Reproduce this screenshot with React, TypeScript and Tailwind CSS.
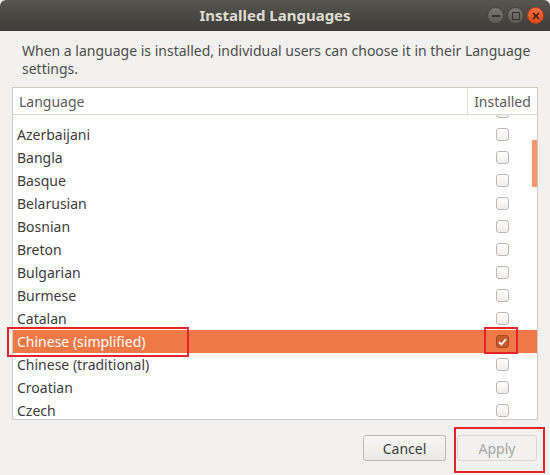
import React from 'react';

const languages = [
  { name: '', installed: false },
  { name: 'Azerbaijani', installed: false },
  { name: 'Bangla', installed: false },
  { name: 'Basque', installed: false },
  { name: 'Belarusian', installed: false },
  { name: 'Bosnian', installed: false },
  { name: 'Breton', installed: false },
  { name: 'Bulgarian', installed: false },
  { name: 'Burmese', installed: false },
  { name: 'Catalan', installed: false },
  { name: 'Chinese (simplified)', installed: true, selected: true },
  { name: 'Chinese (traditional)', installed: false },
  { name: 'Croatian', installed: false },
  { name: 'Czech', installed: false },
];

const Checkbox: React.FC<{ checked: boolean }> = ({ checked }) =>
  checked ? (
    <div className="w-[13px] h-[13px] rounded-[3px] border border-[#a9461d] bg-[#c65a2e] flex items-center justify-center">
      <svg width="9" height="8" viewBox="0 0 9 8">
        <path d="M1 4.2 L3.4 6.5 L8 1.2" fill="none" stroke="#ffffff" strokeWidth="1.8" />
      </svg>
    </div>
  ) : (
    <div className="w-[13px] h-[13px] rounded-[3px] border border-[#bdb8b0] bg-gradient-to-b from-[#ffffff] to-[#efeeec]" />
  );

const WindowButton: React.FC<{ kind: 'min' | 'max' | 'close' }> = ({ kind }) => {
  const bg =
    kind === 'close'
      ? 'bg-gradient-to-b from-[#f2703f] to-[#df4a1c] border-[#b8401b]'
      : 'bg-gradient-to-b from-[#7a7771] to-[#5d5a55] border-[#45433f]';
  return (
    <div className={`w-[17px] h-[17px] rounded-full border flex items-center justify-center ${bg}`}>
      {kind === 'min' && <div className="w-[8px] h-[2px] bg-[#34332f]" />}
      {kind === 'max' && <div className="w-[8px] h-[8px] border-[1.5px] border-[#34332f]" />}
      {kind === 'close' && (
        <svg width="8" height="8" viewBox="0 0 8 8">
          <path d="M1 1 L7 7 M7 1 L1 7" stroke="#3a1a0e" strokeWidth="1.5" />
        </svg>
      )}
    </div>
  );
};

export default function App() {
  return (
    <div
      className="relative w-[550px] h-[475px] flex flex-col bg-[#f2f1f0] overflow-hidden text-[#3c3c3c]"
      style={{ fontFamily: '"Noto Sans", "DejaVu Sans", sans-serif' }}
    >
      <div className="h-[31px] shrink-0 flex items-center justify-center relative bg-gradient-to-b from-[#57554f] to-[#3d3c38] rounded-t-[6px]">
        <span className="text-[15px] font-bold text-[#dfdbd2]">Installed Languages</span>
        <div className="absolute right-[6px] top-[7px] flex gap-[3px]">
          <WindowButton kind="min" />
          <WindowButton kind="max" />
          <WindowButton kind="close" />
        </div>
      </div>

      <div className="pl-[22px] pr-[4px] pt-[11px] text-[14px] leading-[18px] text-[#4c4c4c] whitespace-nowrap">
        <p>When a language is installed, individual users can choose it in their Language</p>
        <p>settings.</p>
      </div>

      <div className="mx-[12px] mt-[9px] h-[333px] border border-[#cdc9c3] bg-white flex flex-col relative">
        <div className="h-[27px] shrink-0 flex border-b border-[#dcd9d4] text-[14px] text-[#5a5a5a] bg-white z-10">
          <div className="flex-1 flex items-center pl-[6px] border-r border-[#e2dfdb]">Language</div>
          <div className="w-[69px] flex items-center justify-center">Installed</div>
        </div>
        <div className="flex-1 overflow-hidden">
          <div className="-mt-[15px] flex flex-col">
            {languages.map((lang, i) => (
              <div
                key={i}
                className={`h-[23px] shrink-0 flex items-center text-[14px] ${
                  lang.selected ? 'bg-[#f07746] text-white' : ''
                }`}
              >
                <div className="flex-1 pl-[4px]">{lang.name}</div>
                <div className="w-[69px] flex items-center justify-center">
                  <Checkbox checked={lang.installed} />
                </div>
              </div>
            ))}
          </div>
        </div>
        <div className="absolute right-0 top-[52px] w-[5px] h-[47px] bg-[#f4976c]" />
      </div>

      <div className="flex justify-end gap-[11px] pr-[13px] pt-[15px]">
        <button className="w-[83px] h-[26px] rounded-[3px] border border-[#bfbbb4] bg-gradient-to-b from-[#f8f7f6] to-[#ebe9e7] text-[14px] text-[#3c3c3c]">
          Cancel
        </button>
        <button className="w-[80px] h-[26px] rounded-[3px] border border-[#d9d6d1] bg-[#f2f1f0] text-[14px] text-[#a8a8a8]">
          Apply
        </button>
      </div>

      <div className="absolute left-[7px] top-[327px] w-[182px] h-[30px] border-2 border-[#e3242b]" />
      <div className="absolute left-[484px] top-[327px] w-[34px] h-[27px] border-2 border-[#e3242b]" />
      <div className="absolute left-[454px] top-[427px] w-[91px] h-[46px] border-2 border-[#e3242b]" />
    </div>
  );
}
